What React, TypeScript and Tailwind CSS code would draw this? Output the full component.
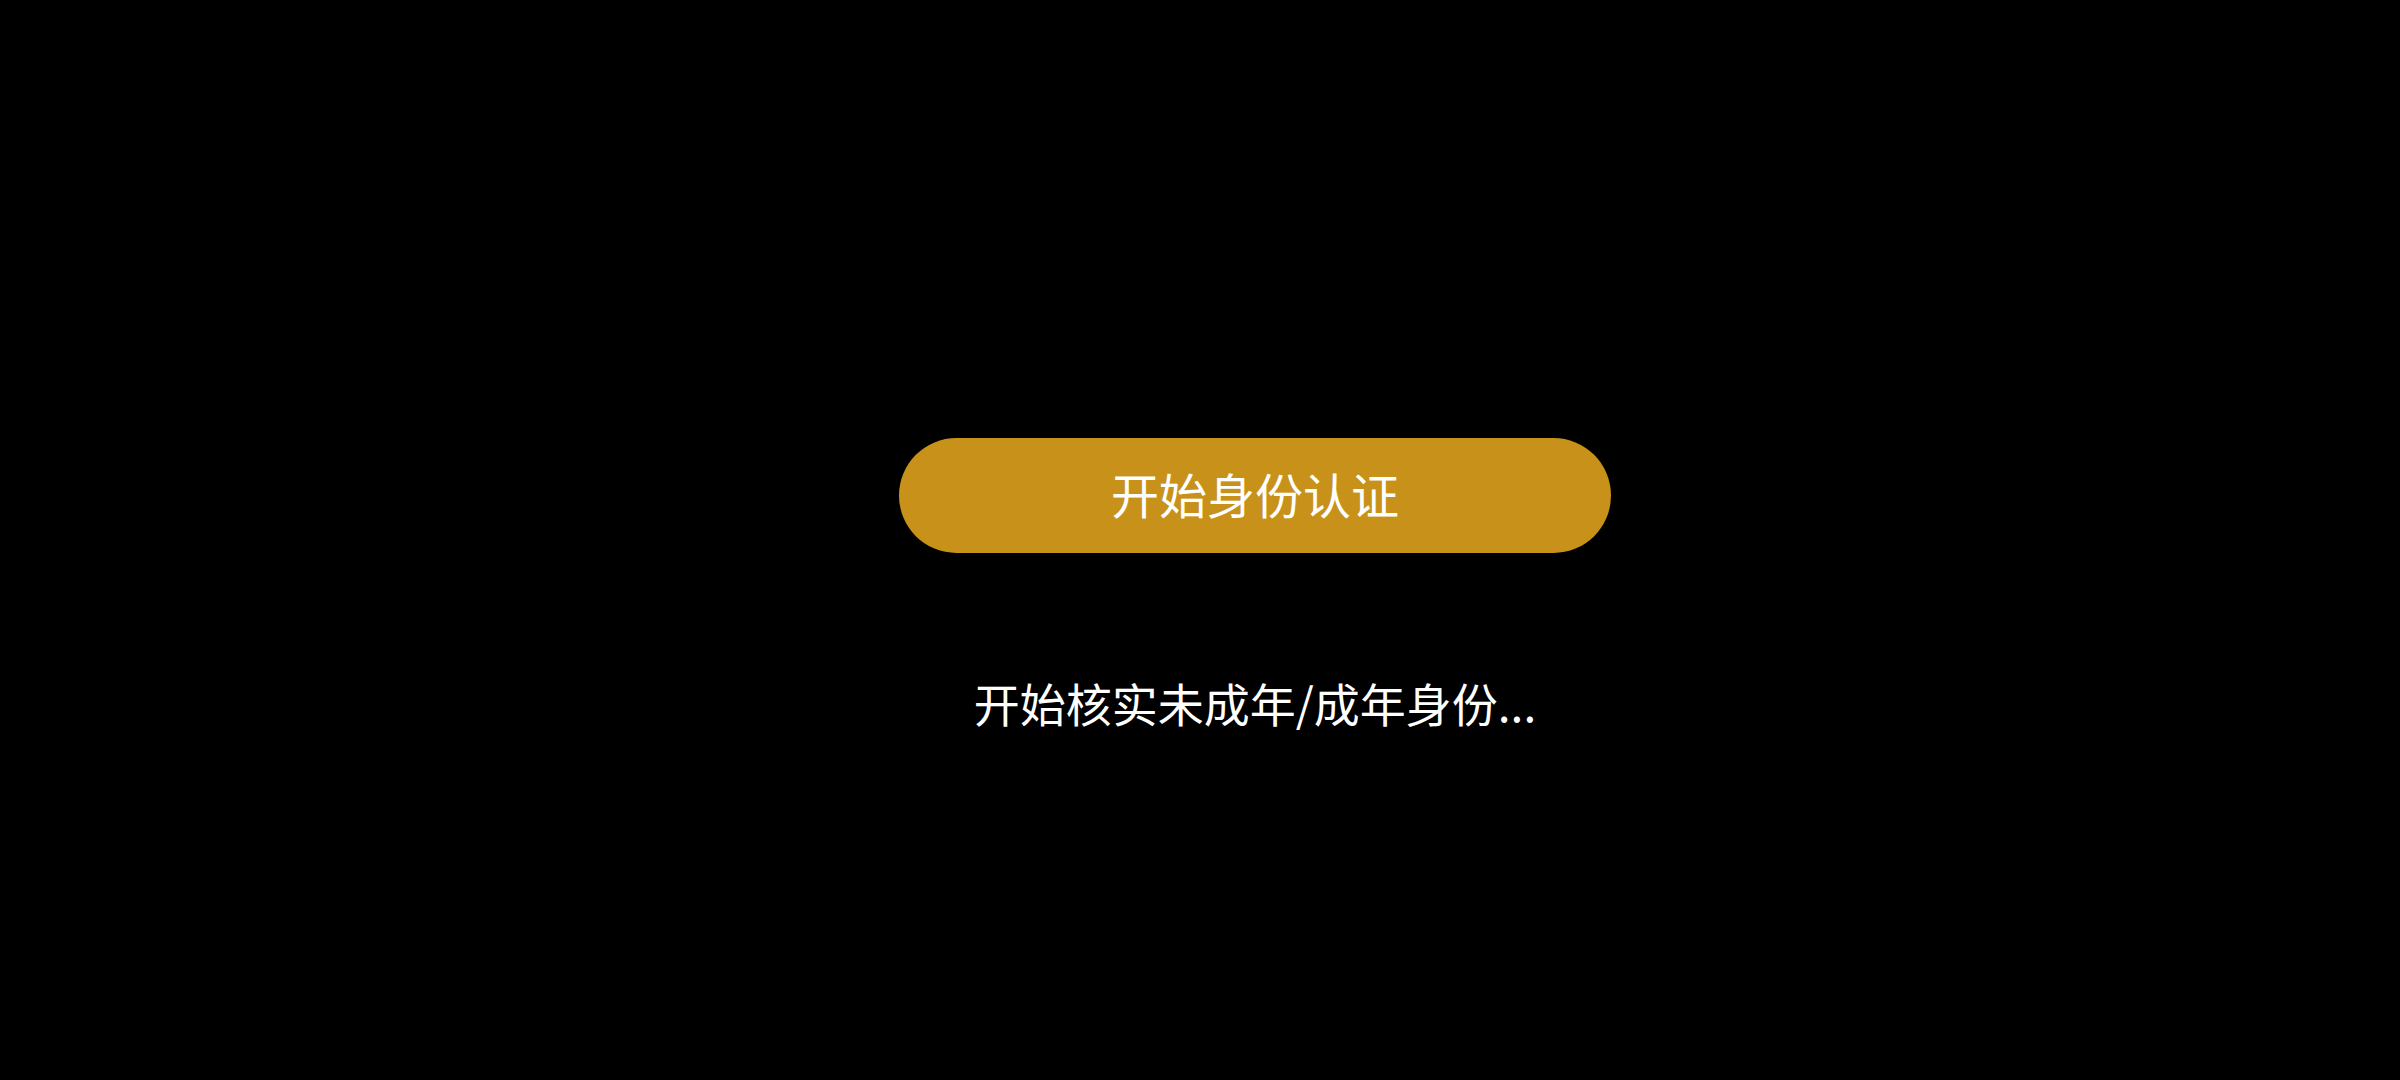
export default function App() {
  return (
    <div
      className="min-h-screen w-full bg-black flex flex-col items-center pt-[438px] pl-[110px]"
      style={{ fontFamily: '"Noto Sans CJK SC", "Noto Sans", sans-serif' }}
    >
      {/* Start verification button */}
      <button
        type="button"
        className="w-[712px] h-[115px] rounded-full bg-[#c8921a] text-white text-[48px] leading-none flex items-center justify-center pb-[6px]"
      >
        开始身份认证
      </button>

      {/* Status text */}
      <p className="mt-[122px] text-white text-[46px] leading-[55px]">开始核实未成年/成年身份...</p>
    </div>
  )
}
